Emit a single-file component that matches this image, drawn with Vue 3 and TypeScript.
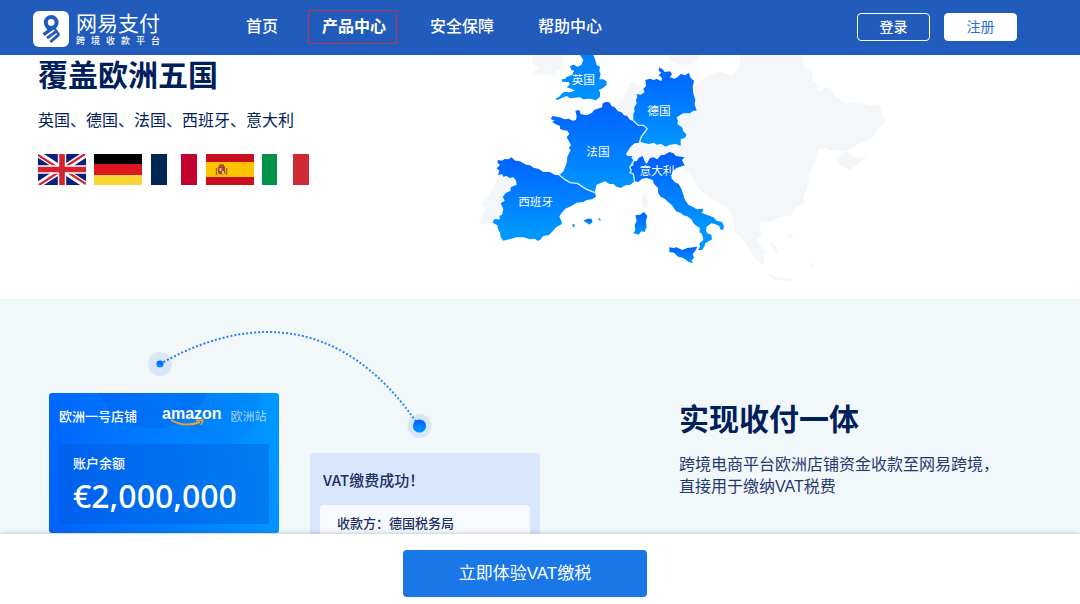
<script setup lang="ts">
interface NavItem {
  label: string
  active?: boolean
}

interface Country {
  name: string
  x: number
  y: number
  fill: string
  shapes: string[]
}

const navItems: NavItem[] = [
  { label: '首页' },
  { label: '产品中心', active: true },
  { label: '安全保障' },
  { label: '帮助中心' },
]

const neighbours: string[] = [
  '810,15 1000,15 1000,50 1025,65 1030,92 1042,98 1045,125 1068,112 1082,116 1092,136 1115,150 1135,160 1170,158 1200,166 1230,166 1238,200 1248,215 1220,240 1205,265 1170,280 1130,302 1080,300 1064,294 1045,298 1035,340 1020,366 1010,420 1000,442 1004,458 980,470 965,495 930,502 905,515 872,515 868,535 875,555 860,570 880,594 898,612 880,604 884,640 868,640 842,606 835,590 815,565 795,545 785,500 780,480 760,465 720,445 685,415 660,370 640,365 645,330 640,310 632,288 650,256 634,232 620,200 680,185 672,110 700,85 750,65 785,75 810,50',
  '1098,330 1130,302 1150,320 1170,325 1195,316 1168,338 1140,360 1108,345',
  '468,312 490,284 510,276 560,284 632,286 650,300 644,322 598,306 568,320 545,326 530,340 520,320 490,332',
  '440,168 468,128 480,95 500,100 524,124 498,150 490,215 460,190',
  '88,374 134,388 140,402 106,428 104,452 92,460 96,495 70,524 28,520 45,480 36,460 60,430 76,400',
  '190,15 280,15 272,58 240,76 182,76 206,55 186,40',
  '515,440 530,425 534,455 528,478 516,470',
  '590,15 690,15 672,40 640,48 604,36',
  '890,668 915,680 970,686 966,692 910,690',
  '900,580 914,584 930,610 916,606',
  '950,548 970,554 966,566 952,562',
  '1018,636 1028,640 1024,654',
]

const countries: Country[] = [
  {
    name: '英国', x: 340, y: 102, fill: 'url(#sea-uk)',
    shapes: ['330,15 340,30 334,45 322,50 312,44 300,48 304,60 312,62 306,76 290,80 286,86 276,88 276,95 296,96 300,104 290,112 304,116 314,122 300,127 284,126 276,130 268,140 256,146 262,150 276,144 290,138 300,145 330,142 340,148 360,146 378,151 390,140 390,126 386,120 398,115 410,104 410,94 400,88 388,88 392,72 388,64 390,50 380,45 376,30 370,15'],
  },
  {
    name: '法国', x: 384, y: 317, fill: 'url(#land-fr)',
    shapes: ['410,155 420,158 424,168 434,172 444,184 454,186 462,196 472,198 478,208 494,216 505,226 520,226 532,234 524,248 514,260 508,278 494,280 482,290 468,312 472,318 486,318 492,330 480,350 484,360 480,368 490,372 494,392 482,404 466,406 452,414 440,410 430,402 418,402 405,394 380,404 374,426 350,416 340,412 322,400 300,398 284,388 268,376 280,364 290,340 292,320 302,300 296,294 303,285 290,262 298,252 292,242 278,240 270,236 270,228 256,222 246,216 254,212 242,207 248,198 268,202 285,208 296,206 308,212 318,210 320,198 316,182 328,180 332,192 350,196 366,188 372,180 396,172 398,160'],
  },
  {
    name: '德国', x: 567, y: 195, fill: 'url(#land-de)',
    shapes: ['568,52 580,60 584,66 600,64 606,72 600,82 614,86 624,80 632,72 646,76 656,68 662,84 672,92 668,110 670,130 676,150 674,162 680,182 670,182 660,190 640,190 620,202 624,212 622,222 636,232 640,244 650,254 644,264 632,268 632,288 618,282 600,284 586,290 574,282 560,284 552,278 536,282 510,276 514,262 524,250 532,236 518,226 505,226 494,216 490,212 490,192 494,184 492,174 500,160 498,150 502,140 500,132 512,134 524,126 520,116 528,108 526,90 540,86 552,90 560,86 574,94 576,84 566,76 574,68 566,62'],
  },
  {
    name: '西班牙', x: 197, y: 468, fill: 'url(#land-es)',
    shapes: [
      '84,330 96,332 104,327 116,328 124,322 136,332 150,334 168,344 180,346 192,354 205,356 220,366 240,366 254,374 268,376 284,388 300,398 322,400 340,412 350,416 374,426 378,440 366,448 350,450 340,456 320,458 304,468 286,476 274,490 268,500 274,512 276,522 258,532 246,546 236,556 220,558 210,570 202,572 194,566 180,568 160,562 140,562 124,566 110,570 100,572 92,562 90,548 84,538 82,526 68,518 72,508 90,508 88,498 96,494 100,478 92,460 104,452 98,440 108,428 122,422 122,412 140,404 138,392 130,382 118,384 110,378 100,380 96,372 84,376 88,362 80,355 90,345 82,338',
      '340,512 352,506 364,506 368,516 358,524 350,518',
      '306,524 314,522 312,534', '384,504 392,507 390,514',
    ],
  },
  {
    name: '意大利', x: 561, y: 375, fill: 'url(#land-it)',
    shapes: [
      '490,332 500,334 506,324 518,318 524,334 530,342 540,324 550,322 562,328 572,316 584,314 598,306 610,310 618,318 644,322 636,330 644,346 620,354 612,360 606,368 604,384 614,396 626,402 634,416 640,434 644,448 655,464 668,470 680,478 698,476 700,482 694,488 714,496 730,502 740,512 756,516 762,528 760,540 750,538 748,528 735,522 724,520 710,530 708,542 712,550 724,554 726,568 716,574 706,580 704,588 696,600 684,600 690,590 688,580 700,570 696,552 688,546 690,534 680,528 672,522 664,508 650,498 640,496 634,490 618,484 606,466 594,456 584,446 572,440 564,428 564,414 552,402 548,390 530,384 516,386 505,396 494,394 490,372 480,368 484,360 478,352 490,346',
    ],
  },
  {
    name: '', x: 1, y: 0, fill: 'url(#land-island)',
    shapes: ['496,496 510,494 522,486 532,498 528,514 530,530 524,546 514,544 506,554 490,550 496,540 494,526 500,512'],
  },
  {
    name: '', x: 2, y: 0, fill: 'url(#land-island)',
    shapes: ['598,592 610,594 620,592 636,600 652,594 682,590 676,602 668,612 672,624 664,632 670,640 656,636 640,624 624,620 612,608 598,606'],
  },
]
</script>

<template>
  <div class="page">
    <header class="topbar">
      <a class="brand" href="#" aria-label="网易支付 跨境收款平台">
        <svg class="brand-mark" viewBox="0 0 36 36" aria-hidden="true">
          <rect width="36" height="36" rx="6" fill="#fff" />
          <g fill="none" stroke="#215bbb">
            <circle cx="18.2" cy="11.4" r="5.4" stroke-width="4" />
            <path d="M23.4 14.4L10.6 23.6" stroke-width="3.4" />
            <path d="M24.4 19.6L14 27.2" stroke-width="2.8" />
            <path d="M26 23.4L17.4 31" stroke-width="3" />
            <path d="M21.6 17.6L26 23.6" stroke-width="2.4" />
            <path d="M13.2 14L15.6 18.4" stroke-width="3" />
          </g>
        </svg>
        <span class="brand-text">
          <span class="brand-name">网易支付</span>
          <span class="brand-sub">跨境收款平台</span>
        </span>
      </a>
      <nav class="nav">
        <a
          v-for="item in navItems"
          :key="item.label"
          href="#"
          class="nav-link"
          :class="{ active: item.active }"
        >{{ item.label }}</a>
      </nav>
      <div class="account">
        <button type="button" class="btn outline">登录</button>
        <button type="button" class="btn solid">注册</button>
      </div>
    </header>

    <main class="content">
      <section class="coverage">
        <div class="copy">
          <h2>覆盖欧洲五国</h2>
          <p>英国、德国、法国、西班牙、意大利</p>
          <div class="flags">
            <svg viewBox="0 0 48 31" role="img" aria-label="英国国旗">
              <rect width="48" height="31" fill="#0a1f7c" />
              <path d="M0 0L48 31M48 0L0 31" stroke="#fff" stroke-width="6.4" />
              <path d="M0 1L24 16.5M48 30L24 14.5M47 0L24 15M1 31L24 16" stroke="#d8222f" stroke-width="2.2" />
              <path d="M24 0V31M0 15.5H48" stroke="#fff" stroke-width="8.4" />
              <path d="M24 0V31M0 15.5H48" stroke="#d8222f" stroke-width="5.6" />
            </svg>
            <svg viewBox="0 0 48 31" role="img" aria-label="德国国旗">
              <rect width="48" height="11" fill="#000" />
              <rect y="10" width="48" height="11" fill="#dd1722" />
              <rect y="21" width="48" height="10" fill="#f6d636" />
            </svg>
            <svg viewBox="0 0 48 31" role="img" aria-label="法国国旗">
              <rect width="48" height="31" fill="#fff" />
              <rect x="1" width="16" height="31" fill="#002654" />
              <rect x="31" width="16" height="31" fill="#c4022f" />
            </svg>
            <svg viewBox="0 0 48 31" role="img" aria-label="西班牙国旗">
              <rect width="48" height="31" fill="#c90f1e" />
              <rect y="8" width="48" height="15" fill="#ffc400" />
              <path d="M12 13q4-5 7 0v6q-3 3-7 0z" fill="#b5402c" />
              <path d="M13.5 14h2v3h-2zM16 17h2v3h-2z" fill="#e8b6a0" />
              <path d="M10.5 14v7M20.5 14v7M13 11h5" stroke="#8a6a35" stroke-width="1.4" />
            </svg>
            <svg viewBox="0 0 48 31" role="img" aria-label="意大利国旗">
              <rect width="48" height="31" fill="#fff" />
              <rect width="15" height="31" fill="#009246" />
              <rect x="31" width="16" height="31" fill="#ce2b37" />
            </svg>
          </div>
        </div>
        <svg class="map" viewBox="0 15 1290 705" role="img" aria-label="欧洲五国地图">
          <defs>
            <linearGradient id="sea-uk" x1="0" y1="0" x2="0" y2="1">
              <stop offset="0" stop-color="#0080ff" /><stop offset="1" stop-color="#0094ff" />
            </linearGradient>
            <linearGradient id="land-fr" x1="0" y1="0" x2="0" y2="1">
              <stop offset="0" stop-color="#0060ff" /><stop offset="1" stop-color="#0096ff" />
            </linearGradient>
            <linearGradient id="land-de" x1="0" y1="0" x2="0" y2="1">
              <stop offset="0" stop-color="#0062ff" /><stop offset="1" stop-color="#0098ff" />
            </linearGradient>
            <linearGradient id="land-es" x1="0" y1="0" x2="0" y2="1">
              <stop offset="0" stop-color="#0062ff" /><stop offset="0.9" stop-color="#0098ff" />
            </linearGradient>
            <linearGradient id="land-it" x1="0" y1="0" x2="0" y2="1">
              <stop offset="0" stop-color="#005cff" /><stop offset="0.75" stop-color="#0096ff" />
            </linearGradient>
            <linearGradient id="land-island" x1="0" y1="0" x2="0" y2="1">
              <stop offset="0" stop-color="#0060ff" /><stop offset="1" stop-color="#0096ff" />
            </linearGradient>
          </defs>
          <polygon v-for="points in neighbours" :key="points" :points="points" fill="#f3f7f9" />
          <g v-for="(country, i) in countries" :key="i" :fill="country.fill">
            <polygon v-for="points in country.shapes" :key="points" :points="points" />
          </g>
          <g fill="none" stroke="#d8eefc" stroke-width="4" stroke-linejoin="round">
            <path d="M490 212L505 226L520 226L532 236L514 260L508 278" />
            <path d="M268 376L284 388L300 398L322 400L340 412L350 418L374 428" />
            <path d="M486 320L492 332L479 352L484 360L480 368L490 372L494 396" />
          </g>
          <g class="map-labels">
            <template v-for="country in countries" :key="country.x">
              <text v-if="country.name" :x="country.x" :y="country.y">{{ country.name }}</text>
            </template>
          </g>
        </svg>
      </section>

      <section class="payment">
        <div class="stage">
          <svg class="route" viewBox="0 0 491 110" aria-hidden="true">
            <defs>
              <linearGradient id="dot" x1="0" y1="0" x2="0" y2="1">
                <stop offset="0" stop-color="#0060ff" /><stop offset="1" stop-color="#0099ff" />
              </linearGradient>
              <linearGradient id="trail" x1="0" y1="0" x2="1" y2="0">
                <stop offset="0" stop-color="#2f74ea" /><stop offset="1" stop-color="#1f93ff" />
              </linearGradient>
            </defs>
            <circle cx="111" cy="35" r="12" fill="#d8e6f8" />
            <circle cx="370.5" cy="97" r="12" fill="#d8e6f8" />
            <path d="M111 35C190 -10 290 -22 370 97" fill="none" stroke="url(#trail)" stroke-width="2" stroke-dasharray="2 2" />
            <circle cx="111" cy="35" r="3.6" fill="url(#dot)" />
            <circle cx="370.5" cy="97" r="6.6" fill="url(#dot)" />
          </svg>

          <article class="shop">
            <div class="shop-head">
              <span class="shop-name">欧洲一号店铺</span>
              <span class="amazon">
                amazon
                <svg class="smile" viewBox="0 0 36 8" aria-hidden="true">
                  <path d="M1 1Q15 9 30 3" fill="none" stroke="#f0a02c" stroke-width="2" />
                  <path d="M26 1.5L33 1L31 6" fill="none" stroke="#f0a02c" stroke-width="1.5" />
                </svg>
              </span>
              <span class="site">欧洲站</span>
            </div>
            <div class="balance">
              <span class="balance-label">账户余额</span>
              <strong class="amount">€2,000,000</strong>
            </div>
          </article>

          <article class="receipt">
            <h3>VAT缴费成功！</h3>
            <div class="receipt-body">收款方：德国税务局</div>
          </article>
        </div>

        <div class="pitch">
          <h2>实现收付一体</h2>
          <p>跨境电商平台欧洲店铺资金收款至网易跨境，<br>直接用于缴纳VAT税费</p>
        </div>
      </section>
    </main>

    <footer class="cta-bar">
      <button type="button" class="cta">立即体验VAT缴税</button>
    </footer>
  </div>
</template>

<style>
body {
  margin: 0;
}
</style>

<style scoped>
.page {
  display: grid;
  grid-template-rows: auto minmax(0, 1fr) auto;
  height: 100vh;
  overflow: hidden;
  background: #fff;
  color: #00205b;
  font-family: "Liberation Sans", "Noto Sans CJK SC", sans-serif;
}

h2,
h3,
p {
  margin: 0;
}

a {
  color: inherit;
  text-decoration: none;
}

button {
  box-sizing: border-box;
  padding: 0;
  font-family: inherit;
  cursor: pointer;
}

.topbar {
  box-sizing: border-box;
  display: flex;
  align-items: center;
  height: 55px;
  padding: 0 63px 2px 33px;
  background: #215bbb;
  color: #fff;
}

.brand {
  display: flex;
  align-items: center;
  gap: 7px;
  padding-top: 4px;
}

.brand-mark {
  width: 36px;
  height: 36px;
}

.brand-text {
  display: flex;
  flex-direction: column;
}

.brand-name {
  font-size: 21px;
  line-height: 25px;
}

.brand-sub {
  font-size: 9px;
  font-weight: 500;
  line-height: 11px;
  text-align: justify;
  text-align-last: justify;
}

.nav {
  display: flex;
  gap: 19px;
  margin-left: 72px;
}

.nav-link {
  padding: 0 10px 0 13px;
  border: 1px solid transparent;
  font-size: 16px;
  font-weight: 500;
  line-height: 32px;
}

.nav-link.active {
  border-color: #c0344a;
  font-weight: 700;
}

.account {
  display: flex;
  gap: 14px;
  margin-left: auto;
}

.btn {
  width: 73px;
  height: 28px;
  border: 1px solid #fff;
  border-radius: 4px;
  font-size: 14px;
  line-height: 26px;
}

.outline {
  background: transparent;
  color: #fff;
  font-weight: 500;
}

.solid {
  background: #fff;
  color: #2b6fd6;
}

.content {
  overflow: hidden;
  display: flex;
  flex-direction: column;
}

.coverage {
  display: flex;
  flex: none;
  height: 244px;
  padding-left: 38px;
}

.copy {
  flex: 0 0 432px;
  padding-top: 1px;
}

h2 {
  font-size: 30px;
  line-height: 40px;
}

p {
  font-size: 16px;
  line-height: 22px;
}

.copy p {
  margin-top: 14px;
}

.flags {
  display: flex;
  gap: 8px;
  margin-top: 22px;
}

.flags svg {
  width: 48px;
  height: 31px;
}

.map {
  width: 430px;
  height: 235px;
}

.map-labels {
  fill: #fff;
  font-size: 35px;
  text-anchor: middle;
}

.payment {
  display: flex;
  flex: 1 0 auto;
  gap: 139px;
  padding-left: 49px;
  background: #f2f7fa;
}

.stage {
  position: relative;
  display: grid;
  grid-template-columns: 230px 230px;
  gap: 31px;
  align-items: start;
  padding-top: 94px;
}

.route {
  position: absolute;
  top: 30px;
  left: 0;
  width: 491px;
  height: 110px;
}

.shop {
  box-sizing: border-box;
  height: 140px;
  padding: 12px 10px 8px;
  border-radius: 3px;
  background:
    radial-gradient(circle at 104px -24px, rgba(0, 80, 220, 0.25) 0 59px, transparent 60px),
    radial-gradient(circle at 172px 12px, rgba(0, 80, 220, 0.14) 0, rgba(0, 80, 220, 0.1) 38px, transparent 42px),
    linear-gradient(80deg, #0062ff, #0099ff);
  color: #fff;
}

.shop-head {
  display: flex;
  align-items: center;
  height: 21px;
  font-size: 13px;
  white-space: nowrap;
}

.shop-name {
  font-weight: 500;
}

.amazon {
  position: relative;
  align-self: flex-start;
  margin-left: 25px;
  font-size: 16px;
  font-weight: 700;
  line-height: 18px;
}

.smile {
  position: absolute;
  top: 14px;
  left: 8px;
  width: 36px;
  height: 8px;
}

.site {
  margin-left: 9px;
  color: #a3d2ff;
  font-size: 12px;
}

.balance {
  display: flex;
  flex-direction: column;
  height: 70px;
  margin-top: 18px;
  padding: 10px 0 0 14px;
  border-radius: 3px;
  background: linear-gradient(80deg, #0060ee, #007df0);
}

.balance-label {
  font-size: 13px;
  font-weight: 500;
  line-height: 20px;
}

.amount {
  font-family: "Noto Sans", sans-serif;
  font-size: 32px;
  font-weight: 500;
  line-height: 44px;
}

.receipt {
  box-sizing: border-box;
  height: 140px;
  margin-top: 60px;
  padding: 16px 10px;
  border-radius: 3px;
  background: #d8e6fe;
  color: #1c2f63;
}

h3 {
  padding-left: 3px;
  font-family: "Noto Sans CJK SC", sans-serif;
  font-size: 15px;
  font-weight: 500;
  line-height: 22px;
}

.receipt-body {
  height: 70px;
  margin-top: 14px;
  padding: 9px 17px;
  border-radius: 4px;
  background: #f7fafe;
  font-size: 13px;
  font-weight: 500;
  line-height: 20px;
}

.pitch {
  padding-top: 101px;
}

.pitch p {
  margin-top: 14px;
  color: #1f3a70;
}

.cta-bar {
  position: relative;
  box-sizing: border-box;
  display: flex;
  align-items: center;
  justify-content: center;
  height: 70px;
  padding: 8px 30px 0 0;
  box-shadow: 0 0 5px rgba(60, 70, 90, 0.35);
  background: #fff;
}

.cta {
  width: 244px;
  height: 47px;
  padding-bottom: 4px;
  border: 0;
  border-radius: 4px;
  background: #1977e8;
  color: #fff;
  font-size: 17px;
}
</style>
